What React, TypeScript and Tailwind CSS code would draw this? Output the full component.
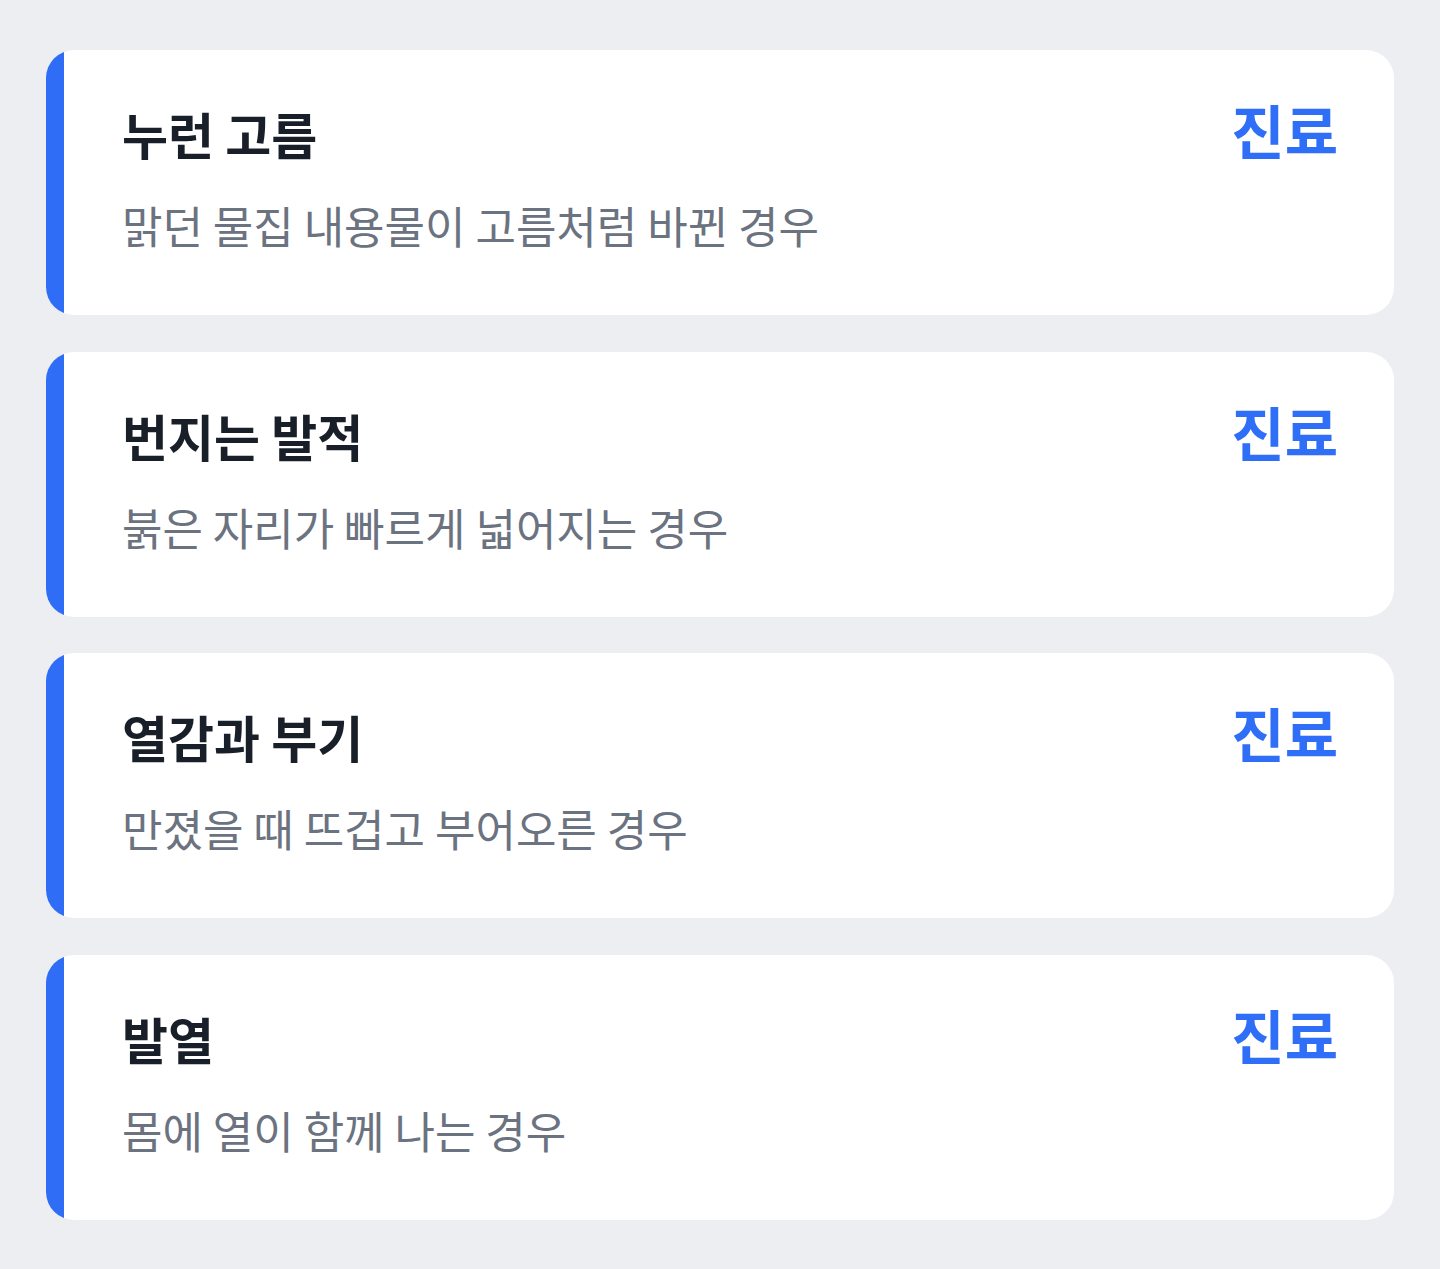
const items = [
  { title: "누런 고름", desc: "맑던 물집 내용물이 고름처럼 바뀐 경우" },
  { title: "번지는 발적", desc: "붉은 자리가 빠르게 넓어지는 경우" },
  { title: "열감과 부기", desc: "만졌을 때 뜨겁고 부어오른 경우" },
  { title: "발열", desc: "몸에 열이 함께 나는 경우" },
]

function Card({ title, desc }: { title: string; desc: string }) {
  return (
    <div className="flex h-[265px] overflow-hidden rounded-[28px] bg-white">
      <div className="w-[18px] shrink-0 bg-[#2f6df6]" />
      <div className="flex flex-1 items-start justify-between pl-[58px] pr-[56px] pt-[47px]">
        <div className="flex flex-col">
          <h3 className="text-[50px] font-bold leading-[72px] text-[#191f28]">{title}</h3>
          <p className="mt-[28px] text-[44px] leading-[56px] text-[#6b7280]">{desc}</p>
        </div>
        <span className="-mt-[4px] text-[58px] font-bold leading-[72px] text-[#2f6ef6]">진료</span>
      </div>
    </div>
  )
}

export default function App() {
  return (
    <div
      className="min-h-[1269px] bg-[#eceef2] px-[46px] pt-[50px]"
      style={{ fontFamily: '"Noto Sans CJK KR", "Noto Sans", sans-serif' }}
    >
      <div className="flex flex-col gap-[36.67px]">
        {items.map((it) => (
          <Card key={it.title} title={it.title} desc={it.desc} />
        ))}
      </div>
    </div>
  )
}
